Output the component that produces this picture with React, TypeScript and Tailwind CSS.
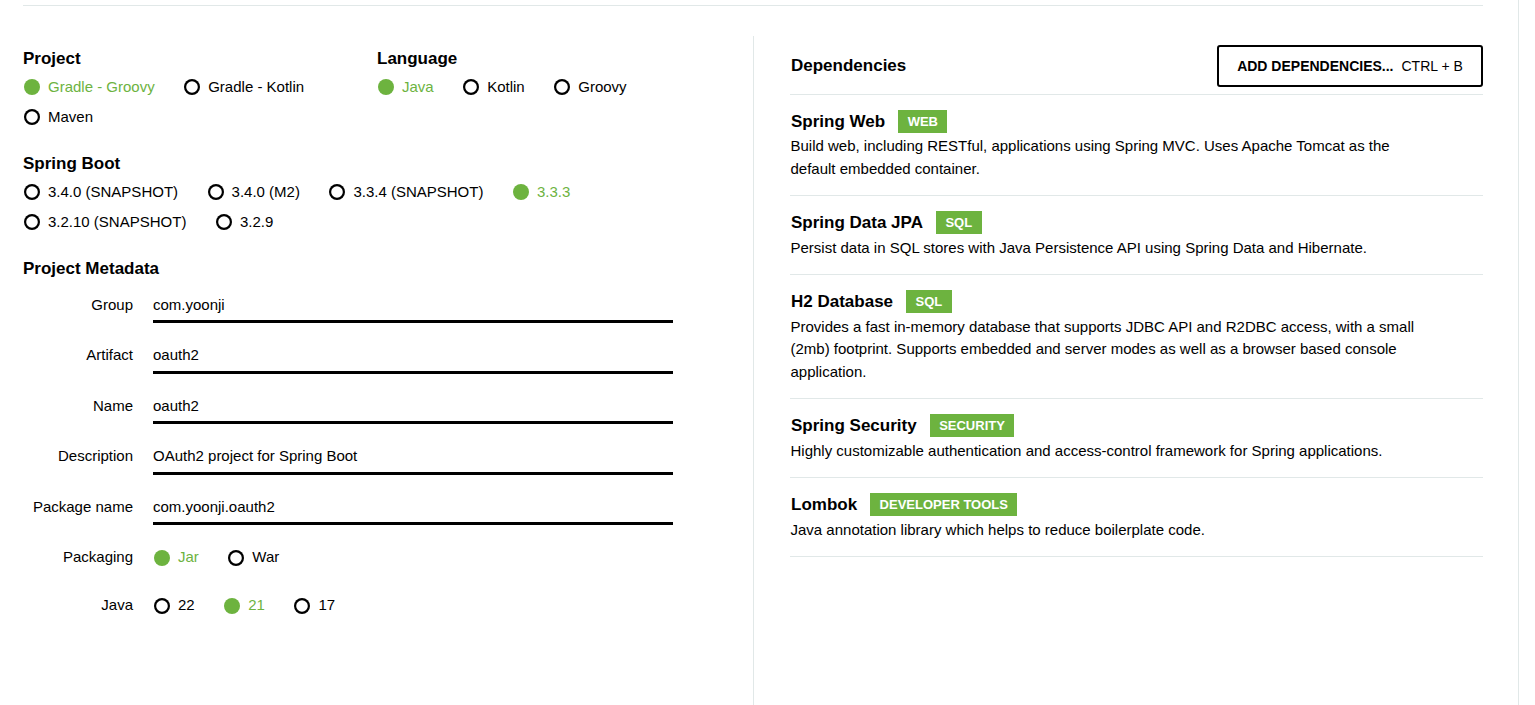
import React from "react";

const font = "font-['Liberation_Sans',Arial,sans-serif]";

function Radio({ label, checked }: { label: string; checked?: boolean }) {
  return (
    <label className={`flex h-[30px] items-center pr-[28.5px] text-[15px] ${checked ? "text-[#6db33f]" : "text-black"}`}>
      {checked ? (
        <span className="mr-2 ml-px size-4 rounded-full bg-[#6db33f]" />
      ) : (
        <span className="mr-2 ml-px size-4 rounded-full shadow-[inset_0_0_0_2.2px_#000]" />
      )}
      {label}
    </label>
  );
}

function RadioGroup({ items, active, className }: { items: string[]; active: string; className: string }) {
  return (
    <div className={`flex flex-wrap ${className}`}>
      {items.map((item) => (
        <Radio key={item} label={item} checked={item === active} />
      ))}
    </div>
  );
}

const metadata = [
  { label: "Group", value: "com.yoonji" },
  { label: "Artifact", value: "oauth2" },
  { label: "Name", value: "oauth2" },
  { label: "Description", value: "OAuth2 project for Spring Boot" },
  { label: "Package name", value: "com.yoonji.oauth2" },
];

const deps = [
  {
    name: "Spring Web",
    tag: "WEB",
    text: "Build web, including RESTful, applications using Spring MVC. Uses Apache Tomcat as the default embedded container.",
  },
  {
    name: "Spring Data JPA",
    tag: "SQL",
    text: "Persist data in SQL stores with Java Persistence API using Spring Data and Hibernate.",
  },
  {
    name: "H2 Database",
    tag: "SQL",
    text: "Provides a fast in-memory database that supports JDBC API and R2DBC access, with a small (2mb) footprint. Supports embedded and server modes as well as a browser based console application.",
  },
  {
    name: "Spring Security",
    tag: "SECURITY",
    text: "Highly customizable authentication and access-control framework for Spring applications.",
  },
  {
    name: "Lombok",
    tag: "DEVELOPER TOOLS",
    text: "Java annotation library which helps to reduce boilerplate code.",
  },
];

function Heading({ children }: { children: React.ReactNode }) {
  return <h2 className="h-[24px] text-[17px] leading-[24px] font-bold text-black">{children}</h2>;
}

export default function App() {
  return (
    <div className={`h-[705px] w-[1519px] overflow-hidden border-r border-[#e1e8e8] bg-white pt-[5px] pl-[23px] ${font}`}>
      <div className="w-[1460px] border-t border-[#e1e8e8]" />
      <div className="mt-[30px] flex h-[670px] w-[1460px]">
        <section className="w-[731px] border-r border-[#e1e8e8] pt-[11px]">
          <div className="flex">
            <div className="w-[354px]">
              <Heading>Project</Heading>
              <RadioGroup items={["Gradle - Groovy", "Gradle - Kotlin", "Maven"]} active="Gradle - Groovy" className="mt-px w-[354px]" />
            </div>
            <div>
              <Heading>Language</Heading>
              <RadioGroup items={["Java", "Kotlin", "Groovy"]} active="Java" className="mt-px w-[350px]" />
            </div>
          </div>
          <div className="mt-[20px]">
            <Heading>Spring Boot</Heading>
            <RadioGroup
              items={["3.4.0 (SNAPSHOT)", "3.4.0 (M2)", "3.3.4 (SNAPSHOT)", "3.3.3", "3.2.10 (SNAPSHOT)", "3.2.9"]}
              active="3.3.3"
              className="mt-px w-[600px]"
            />
          </div>
          <div className="mt-[20px]">
            <Heading>Project Metadata</Heading>
            <div className="mt-[6px]">
              {metadata.map((row) => (
                <div key={row.label} className="flex h-[50.5px] text-[15px]">
                  <div className="w-[110px] pt-[5.5px] text-right leading-[24px] text-black">{row.label}</div>
                  <div className="ml-[20px] h-[36px] w-[520px] border-b-[3px] border-black pt-[5.5px] leading-[24px] text-black">
                    {row.value}
                  </div>
                </div>
              ))}
            </div>
            <div className="mt-[3px] flex items-center">
              <div className="w-[110px] text-right text-[15px] text-black">Packaging</div>
              <RadioGroup items={["Jar", "War"]} active="Jar" className="ml-[20px]" />
            </div>
            <div className="mt-[18px] flex items-center">
              <div className="w-[110px] text-right text-[15px] text-black">Java</div>
              <RadioGroup items={["22", "21", "17"]} active="21" className="ml-[20px]" />
            </div>
          </div>
        </section>
        <section className="ml-[36px] w-[693px]">
          <div className="flex h-[58.5px] items-start justify-between border-b border-[#e1e8e8] pt-[9px]">
            <Heading>
              <span className="mt-[9px] block pl-px">Dependencies</span>
            </Heading>
            <button className="flex h-[42px] w-[266px] items-center justify-center rounded-[3px] border-2 border-black bg-white text-[14px] text-black">
              <strong className="mr-2">ADD DEPENDENCIES...</strong> CTRL + B
            </button>
          </div>
          {deps.map((dep) => (
            <div key={dep.name} className="border-b border-[#e1e8e8] pt-[15.4px] pb-[14.6px]">
              <div className="flex h-[23px] items-center pl-px">
                <span className="text-[17px] font-bold text-black">{dep.name}</span>
                <span className="ml-[13px] flex h-[23px] items-center bg-[#6db33f] px-[9.5px] text-[13px] font-bold text-white">
                  {dep.tag}
                </span>
              </div>
              <p className="mt-[2.5px] ml-[0.5px] w-[630px] text-[15px] leading-[22.5px] text-black">{dep.text}</p>
            </div>
          ))}
        </section>
      </div>
    </div>
  );
}
